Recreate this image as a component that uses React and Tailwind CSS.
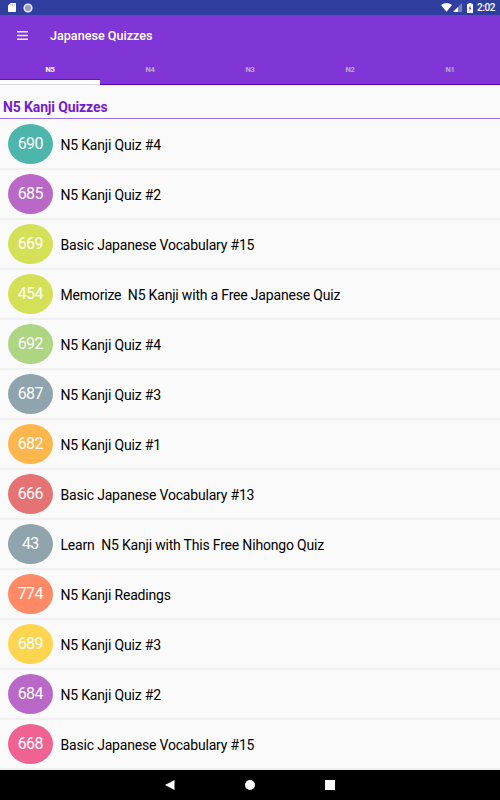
const tabs = ["N5", "N4", "N3", "N2", "N1"];

const quizzes = [
  { id: 690, title: "N5 Kanji Quiz #4", color: "bg-[#4db6ac]" },
  { id: 685, title: "N5 Kanji Quiz #2", color: "bg-[#ba68c8]" },
  { id: 669, title: "Basic Japanese Vocabulary #15", color: "bg-[#d4e157]" },
  { id: 454, title: "Memorize  N5 Kanji with a Free Japanese Quiz", color: "bg-[#d4e157]" },
  { id: 692, title: "N5 Kanji Quiz #4", color: "bg-[#aed581]" },
  { id: 687, title: "N5 Kanji Quiz #3", color: "bg-[#90a4ae]" },
  { id: 682, title: "N5 Kanji Quiz #1", color: "bg-[#ffb74d]" },
  { id: 666, title: "Basic Japanese Vocabulary #13", color: "bg-[#e57373]" },
  { id: 43, title: "Learn  N5 Kanji with This Free Nihongo Quiz", color: "bg-[#90a4ae]" },
  { id: 774, title: "N5 Kanji Readings", color: "bg-[#ff8a65]" },
  { id: 689, title: "N5 Kanji Quiz #3", color: "bg-[#ffd54f]" },
  { id: 684, title: "N5 Kanji Quiz #2", color: "bg-[#ba68c8]" },
  { id: 668, title: "Basic Japanese Vocabulary #15", color: "bg-[#f06292]" },
];

function StatusBar() {
  return (
    <div className="flex h-[15px] shrink-0 items-center bg-[#303f9f] pl-2 pr-[5px] text-white">
      <svg className="h-[9px] w-2" viewBox="0 0 8 9" fill="currentColor">
        <path d="M2.6 0H7.2Q8 0 8 .8V8.2Q8 9 7.2 9H.8Q0 9 0 8.2V2.6Z" />
        <path d="M3 1.2V2.8M4.6 1.2V2.8M6.2 1.2V2.8" stroke="#8d96cb" strokeWidth="0.7" />
      </svg>
      <svg className="ml-[7px] size-[10px]" viewBox="0 0 10 10">
        <circle cx="5" cy="5" r="3.8" fill="#929bd0" stroke="#e8eaf6" strokeWidth="1.6" />
      </svg>
      <div className="ml-auto flex items-center">
        <svg className="h-[9px] w-[11px]" viewBox="0 0 11 9" fill="currentColor">
          <path d="M0 2Q5.500-1.900 11 2L5.500 8.800Z" />
        </svg>
        <svg className="ml-[1px] size-[9px]" viewBox="0 0 9 9" fill="currentColor">
          <path d="M0 9L9 0V9Z" opacity="0.35" />
          <path d="M0 9L5 4V9Z" />
        </svg>
        <svg className="ml-[5px] h-[10px] w-[6px]" viewBox="0 0 6 10" fill="currentColor">
          <path d="M1.500 0H4.500V1H5.500Q6 1 6 1.500V9.500Q6 10 5.500 10H.5Q0 10 0 9.500V1.500Q0 1 .5 1H1.500Z" />
          <path d="M3.300 2.500L1.800 5.500H2.700V8L4.200 4.800H3.300Z" fill="#303f9f" />
        </svg>
        <span className="ml-1 w-[18px] text-[10px] leading-[15px] font-medium tracking-[-0.4px]">2:02</span>
      </div>
    </div>
  );
}

function Toolbar() {
  return (
    <div className="flex h-10 shrink-0 items-center pl-[17px] text-white">
      <svg className="h-[9px] w-[11px]" viewBox="0 0 11 9" fill="#f7f0fd">
        <path d="M0 0H11V1.500H0ZM0 3.700H11V5.200H0ZM0 7.400H11V8.900H0Z" />
      </svg>
      <h1 className="ml-[22px] pt-[2px] text-[12.6px] leading-5 font-medium">Japanese Quizzes</h1>
    </div>
  );
}

function Tabs() {
  return (
    <div className="grid h-[30px] shrink-0 grid-cols-5 text-center text-[7.5px] leading-[29px] font-bold tracking-[-0.2px]">
      {tabs.map((tab, index) => (
        <div
          key={tab}
          className={
            index === 0
              ? "relative h-[30px] border-b border-[#dcd8df] text-white"
              : "h-[30px] border-b border-[#6200b3] text-[#bdaccc]"
          }
        >
          {tab}
          {index === 0 && (
            <span className="absolute inset-x-0 bottom-0 h-[5px] border-t border-[#6a10c0] bg-white" />
          )}
        </div>
      ))}
    </div>
  );
}

function QuizRow({ quiz }) {
  return (
    <li className="flex h-[50px] items-center border-b-2 border-[#f0f0f0] pl-[7.5px]">
      <span
        className={`flex h-[40.5px] w-[45.5px] items-center justify-center rounded-[50%] text-base tracking-[-0.7px] text-white ${quiz.color}`}
      >
        {quiz.id}
      </span>
      <span className="ml-[7.5px] pt-[3px] text-[14px] tracking-[-0.19px] whitespace-pre text-black">
        {quiz.title}
      </span>
    </li>
  );
}

function NavigationBar() {
  return (
    <div className="flex h-[30px] shrink-0 items-center justify-center gap-[70px] bg-black text-white">
      <svg className="size-[10px]" viewBox="0 0 10 10" fill="currentColor">
        <path d="M9.500 0V10L0 5Z" />
      </svg>
      <span className="size-[10px] rounded-full bg-white" />
      <span className="size-[10px] bg-white" />
    </div>
  );
}

export default function App() {
  return (
    <div className="flex h-[800px] w-[500px] flex-col overflow-hidden bg-[#fafafa] font-['Roboto',sans-serif]">
      <StatusBar />
      <header className="h-[70px] shrink-0 bg-[#8036d6]">
        <Toolbar />
        <Tabs />
      </header>
      <main className="min-h-0 flex-1 overflow-hidden">
        <h2 className="h-[34px] border-b border-[#9a72dc] pt-3 pl-[3px] text-[14px] leading-5 font-bold tracking-[-0.13px] text-[#761bd0]">
          N5 Kanji Quizzes
        </h2>
        <ul className="pt-px">
          {quizzes.map((quiz) => (
            <QuizRow key={quiz.id} quiz={quiz} />
          ))}
        </ul>
      </main>
      <NavigationBar />
    </div>
  );
}
